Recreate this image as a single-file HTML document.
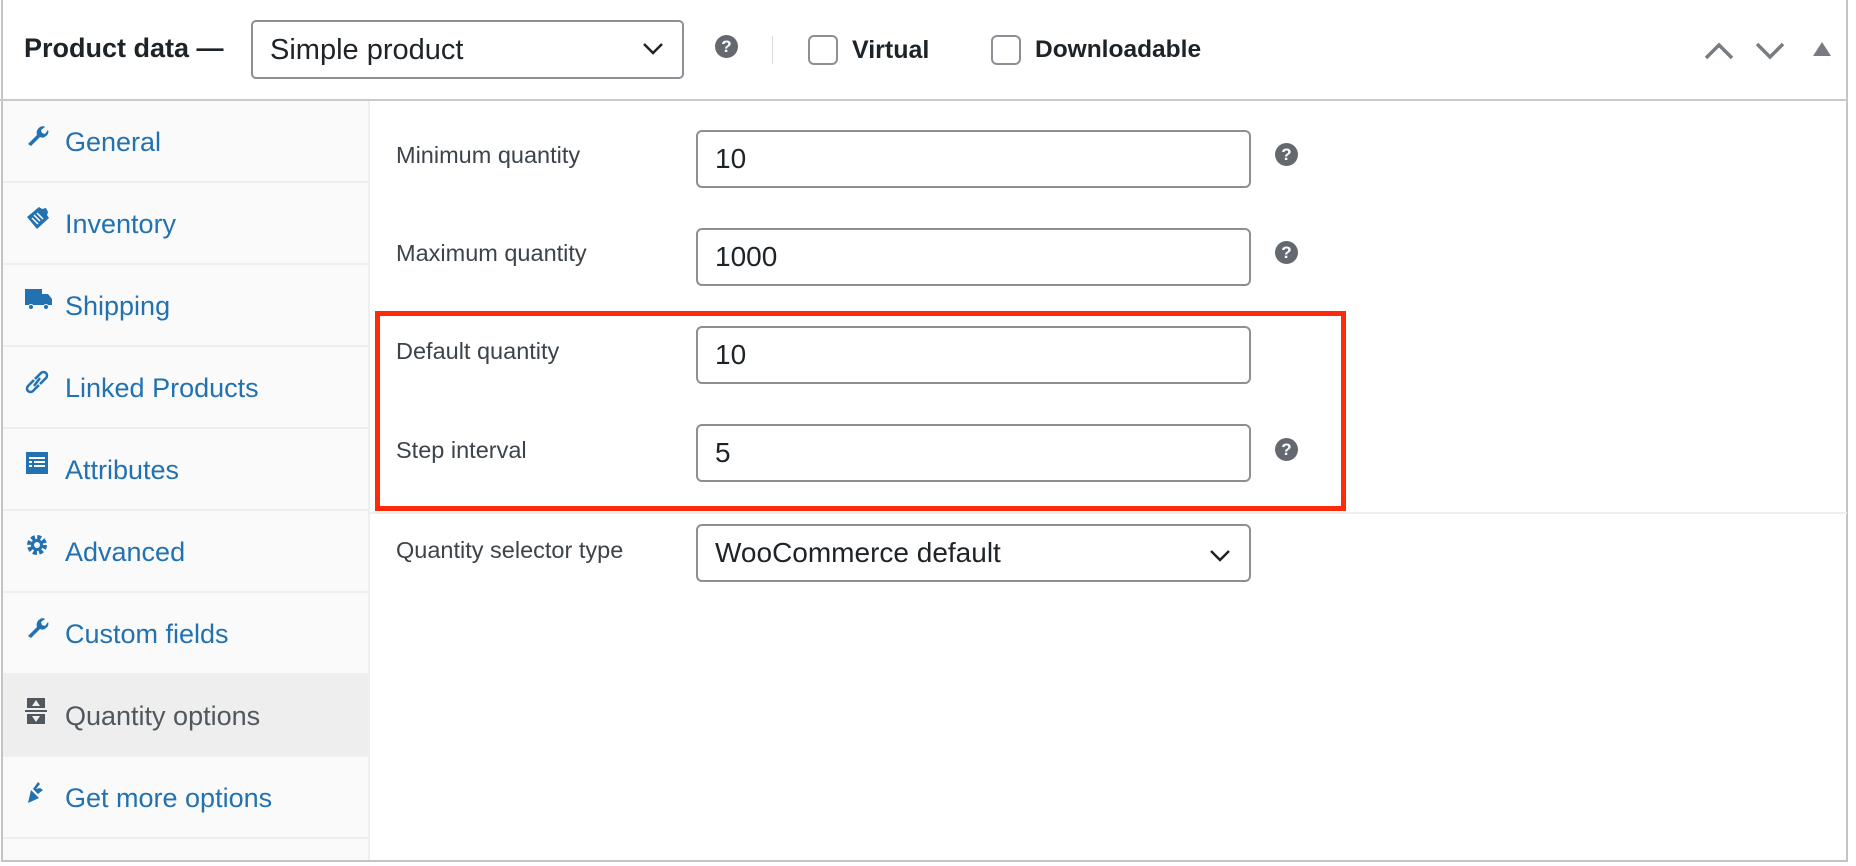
<!DOCTYPE html>
<html><head><style>
*{box-sizing:border-box;margin:0;padding:0}
body{width:1856px;height:866px;background:#fff;font-family:"Liberation Sans",Arial,sans-serif;position:relative;overflow:hidden;color:#1d2327}
.abs{position:absolute}
.outer{left:1px;top:0;width:1847px;height:862px;border:2px solid #c3c4c7;border-top:none}
.hdr{left:0;top:99px;width:1848px;height:2px;background:#c8c9cc}
.title{left:24px;top:33px;font-size:27px;font-weight:bold}
.sel{border:2px solid #8c8f94;border-radius:5px;background:#fff}
.help{width:23px;height:23px;border-radius:50%;background:#646970;color:#fff;font-size:17px;font-weight:bold;text-align:center;line-height:23px}
.cb{width:30px;height:30px;border:2px solid #8c8f94;border-radius:6px}
.side{left:3px;top:101px;width:367px;height:759px;background:#fafafa;border-right:2px solid #eee}
.item{position:absolute;left:0;width:365px;height:82px;border-bottom:2px solid #eee;color:#2271b1;font-size:27px}
.item span{position:absolute;left:62px;top:26px}
.item svg{position:absolute;left:22px;top:22px}
.lbl{left:396px;font-size:23.5px;color:#3c434a}
.inp{left:696px;width:555px;height:58px;border:2px solid #8c8f94;border-radius:6px;font-size:28px;padding-left:17px;line-height:54px;color:#1d2327}
</style></head><body>
<div class="abs outer"></div>
<div class="abs hdr"></div>
<div class="abs title">Product data —</div>
<div class="abs sel" style="left:251px;top:20px;width:433px;height:59px"><span style="position:absolute;left:17px;top:12px;font-size:29px">Simple product</span>
<svg style="position:absolute;right:18px;top:20px" width="22" height="14" viewBox="0 0 22 14"><path d="M2 2l9 9 9-9" fill="none" stroke="#1d2327" stroke-width="2.5"/></svg></div>
<div class="abs help" style="left:715px;top:35px">?</div>
<div class="abs" style="left:772px;top:36px;width:1px;height:28px;background:#ddd"></div>
<div class="abs cb" style="left:808px;top:35px"></div>
<div class="abs" style="left:852px;top:36px;font-size:25px;font-weight:bold">Virtual</div>
<div class="abs cb" style="left:991px;top:35px"></div>
<div class="abs" style="left:1035px;top:36px;font-size:24.5px;font-weight:bold">Downloadable</div>
<svg class="abs" style="left:1702px;top:40px" width="34" height="22"><path d="M4 18l13-13 13 13" fill="none" stroke="#787c82" stroke-width="3.5"/></svg>
<svg class="abs" style="left:1753px;top:40px" width="34" height="22"><path d="M4 4l13 13 13-13" fill="none" stroke="#787c82" stroke-width="3.5"/></svg>
<svg class="abs" style="left:1813px;top:42px" width="18" height="16"><path d="M9 0L18 14H0Z" fill="#787c82"/></svg>

<div class="abs side">
<div class="item" style="top:0"><svg width="24" height="24" viewBox="0 0 24 24"><path d="M3 21l9-9c-1-3 0-6 3-8 2-1 4-1 5 0l-4 3 1 3 3 1 3-4c1 2 0 5-2 6-2 2-4 2-6 1l-9 9z" fill="#2271b1"/></svg><span>General</span></div>
<div class="item" style="top:82px"><svg width="26" height="26" viewBox="0 0 26 26"><path d="M2 12L14 2l3 2 4-1 2 4-1 3 2 3-12 11z" fill="#2271b1"/><path d="M7 13l6 6M9 10l6 6M12 8l6 6" stroke="#fff" stroke-width="1.5"/></svg><span>Inventory</span></div>
<div class="item" style="top:164px"><svg width="28" height="26" viewBox="0 0 28 26"><path d="M0 2h17v16H0zM17 7h6l4 5v6H17z" fill="#2271b1"/><circle cx="6" cy="20" r="2.5" fill="#2271b1" stroke="#fafafa"/><circle cx="21" cy="20" r="2.5" fill="#2271b1" stroke="#fafafa"/></svg><span>Shipping</span></div>
<div class="item" style="top:246px"><svg width="24" height="26" viewBox="0 0 24 26"><path d="M10 10l6-6a3 3 0 0 1 5 5l-6 6M14 16l-6 6a3 3 0 0 1-5-5l6-6M9 17l6-8" fill="none" stroke="#2271b1" stroke-width="2.5"/></svg><span>Linked Products</span></div>
<div class="item" style="top:328px"><svg width="24" height="24" viewBox="0 0 24 24"><rect x="1" y="1" width="22" height="22" fill="#2271b1"/><path d="M4 7h16M4 11h3M9 11h11M4 15h3M9 15h11" stroke="#fff" stroke-width="2"/></svg><span>Attributes</span></div>
<div class="item" style="top:410px"><svg width="24" height="24" viewBox="0 0 24 24"><circle cx="12" cy="12" r="7" fill="none" stroke="#2271b1" stroke-width="6" stroke-dasharray="3.5 2"/><circle cx="12" cy="12" r="6" fill="#2271b1"/><circle cx="12" cy="12" r="3" fill="#fafafa"/></svg><span>Advanced</span></div>
<div class="item" style="top:492px"><svg width="24" height="24" viewBox="0 0 24 24"><path d="M3 21l9-9c-1-3 0-6 3-8 2-1 4-1 5 0l-4 3 1 3 3 1 3-4c1 2 0 5-2 6-2 2-4 2-6 1l-9 9z" fill="#2271b1"/></svg><span>Custom fields</span></div>
<div class="item" style="top:574px;background:#eee;color:#50575e"><svg width="22" height="28" viewBox="0 0 22 28"><rect x="2" y="1" width="18" height="10" fill="#50575e"/><rect x="2" y="17" width="18" height="10" fill="#50575e"/><rect x="0" y="13" width="22" height="2" fill="#50575e"/><path d="M11 3l4 6H7zM11 25l4-6H7z" fill="#eee"/></svg><span>Quantity options</span></div>
<div class="item" style="top:656px"><svg width="24" height="26" viewBox="0 0 24 26"><path d="M3 24l3-13 8 8zM8 10l5-7 2 2-4 5 4-1 3 2-5 4z" fill="#2271b1"/></svg><span>Get more options</span></div>
</div>

<div class="abs lbl" style="top:142px">Minimum quantity</div>
<div class="abs inp" style="top:130px">10</div>
<div class="abs help" style="left:1275px;top:143px">?</div>
<div class="abs lbl" style="top:240px">Maximum quantity</div>
<div class="abs inp" style="top:228px">1000</div>
<div class="abs help" style="left:1275px;top:241px">?</div>
<div class="abs lbl" style="top:338px">Default quantity</div>
<div class="abs inp" style="top:326px">10</div>
<div class="abs lbl" style="top:437px">Step interval</div>
<div class="abs inp" style="top:424px">5</div>
<div class="abs help" style="left:1275px;top:438px">?</div>
<div class="abs" style="left:375px;top:311px;width:971px;height:200px;border:5px solid #ff2a0a"></div>
<div class="abs" style="left:370px;top:512px;width:1477px;height:2px;background:#eee"></div>
<div class="abs lbl" style="top:537px">Quantity selector type</div>
<div class="abs inp" style="top:524px">WooCommerce default
<svg style="position:absolute;right:18px;top:23px" width="22" height="14" viewBox="0 0 22 14"><path d="M2 2l9 9 9-9" fill="none" stroke="#1d2327" stroke-width="2.5"/></svg></div>
</body></html>
